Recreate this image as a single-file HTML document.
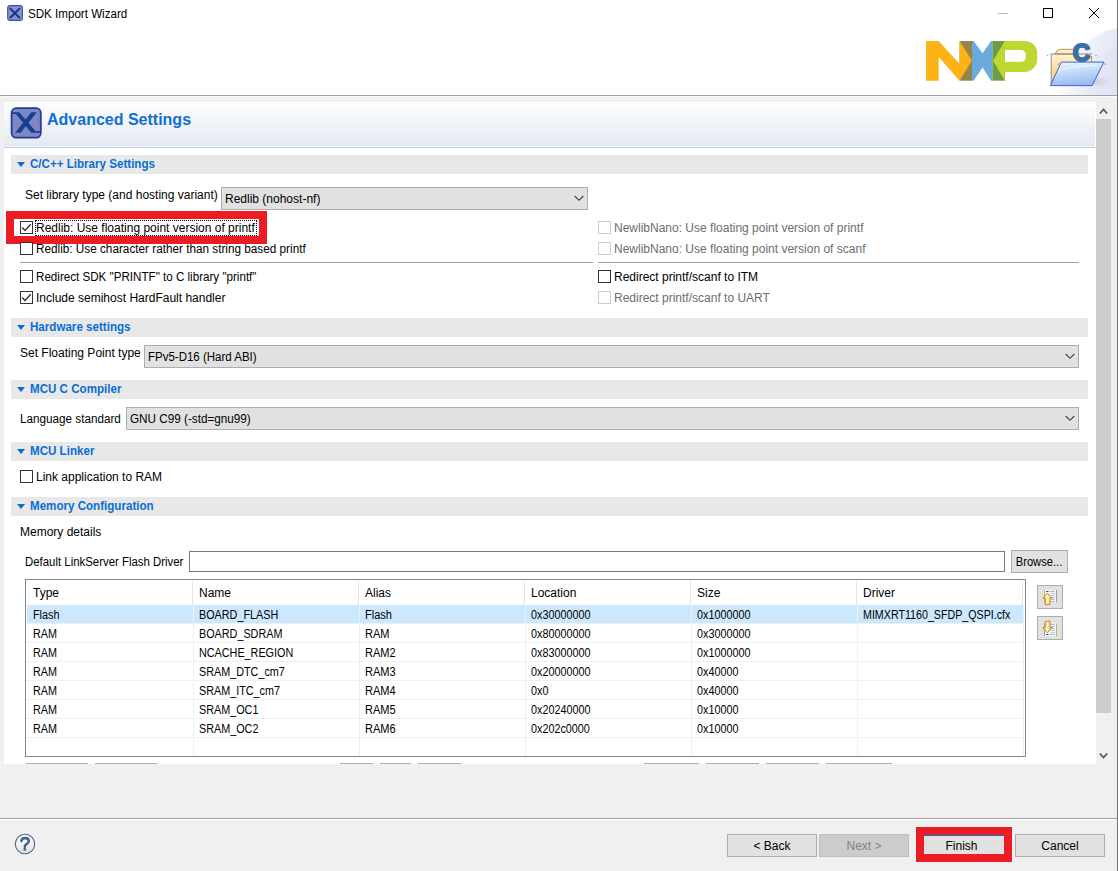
<!DOCTYPE html>
<html><head><meta charset="utf-8">
<style>
*{box-sizing:border-box}
html,body{margin:0;padding:0}
body{width:1118px;height:871px;overflow:hidden;position:relative;background:#f0f0f0;font-family:"Liberation Sans",sans-serif;font-size:12px;color:#000}
.a{position:absolute}
.t{position:absolute;white-space:nowrap;line-height:14px;font-size:12px}
.h{position:absolute;white-space:nowrap;line-height:14px;font-size:12px;font-weight:bold;color:#0a6ed6;transform:scaleX(0.966);transform-origin:0 0}
.bar{position:absolute;left:11px;width:1077px;height:19px;background:#e8e8e8}
.tri{position:absolute;left:17px;width:0;height:0;border-left:4.5px solid transparent;border-right:4.5px solid transparent;border-top:5px solid #0a6ed6}
.cb{position:absolute;width:13px;height:13px;border:1px solid #333;background:#fff}
.cbd{position:absolute;width:13px;height:13px;border:1px solid #cccccc;background:#fff}
.g{color:#6d6d6d}
.combo{position:absolute;height:23px;background:#e1e1e1;border:1px solid #adadad}
.btn{position:absolute;height:23px;background:#e1e1e1;border:1px solid #adadad;text-align:center;line-height:21px;padding-top:1px}
.hl{position:absolute;height:1px}
</style></head><body>

<!-- top white area -->
<div class="a" style="left:0;top:0;width:1117px;height:95px;background:#fff"></div>
<svg class="a" style="left:1030px;top:0" width="87" height="95" viewBox="0 0 87 95">
<defs><linearGradient id="sw1" x1="0" y1="0" x2="1" y2="0.3"><stop offset="0" stop-color="#ffffff" stop-opacity="0"/><stop offset="0.55" stop-color="#eef0fa"/><stop offset="1" stop-color="#e4e8f6"/></linearGradient>
<linearGradient id="sw2" x1="0" y1="0" x2="1" y2="0"><stop offset="0" stop-color="#e6e9f7" stop-opacity="0"/><stop offset="1" stop-color="#dde2f3"/></linearGradient></defs>
<path d="M87 28 C70 31 52 42 40 60 C32 72 28 85 27 95 L87 95 Z" fill="url(#sw1)"/>
<path d="M87 49 C76 50 66 54 58 62 C52 70 50 82 50 95 L87 95 Z" fill="url(#sw2)" opacity="0.8"/>
</svg>
<!-- title icon -->
<svg class="a" style="left:7px;top:5px" width="16" height="16" viewBox="0 0 32 32">
<rect x="1.4" y="1.2" width="29.4" height="29.6" rx="5" fill="#8a90c8" stroke="#3a4fa6" stroke-width="2.2"/>
<path d="M6.6 7.2 L24.6 25 M24.8 7.2 L7 25" stroke="#12348f" stroke-width="4" stroke-linecap="round"/>
</svg>
<div class="t" style="left:28px;top:7px;transform:scaleX(0.966);transform-origin:0 0">SDK Import Wizard</div>
<!-- window controls -->
<div class="a" style="left:998px;top:13px;width:10px;height:1px;background:#b8b8b8"></div>
<div class="a" style="left:1043px;top:8px;width:10px;height:10px;border:1px solid #000"></div>
<svg class="a" style="left:1088px;top:7px" width="12" height="12" viewBox="0 0 12 12"><path d="M1 1 L11 11 M11 1 L1 11" stroke="#000" stroke-width="1"/></svg>

<!-- NXP logo -->
<svg class="a" style="left:920px;top:36px" width="125" height="50" viewBox="920 36 125 50">
<rect x="959.6" y="41" width="12.4" height="39.7" fill="#958648"/>
<rect x="972" y="41" width="20.4" height="39.7" fill="#6caadd"/>
<rect x="992.4" y="41" width="12.4" height="39.7" fill="#6a9d45"/>
<polygon points="926,41 938.7,41 959.6,64.1 959.6,41 971.8,60.6 959.6,80.7 938.7,57 938.7,80.7 926,80.7" fill="#fdb316"/>
<polygon points="973.0,40.2 982.6,53.2 991.6,40.2" fill="#fff"/>
<polygon points="973.0,81.5 982.6,67.6 991.6,81.5" fill="#fff"/>
<path d="M1004.8,41 L1025,41 A12.2,12.2 0 0 1 1037.2,53.2 L1037.2,59.7 A12.2,12.2 0 0 1 1025,71.9 L1004.8,71.9 L1004.8,80.7 L993,60.7 Z M1004.8,50.1 L1004.8,61.8 L1021,61.8 A4.8,4.8 0 0 0 1025.8,57 L1025.8,54.9 A4.8,4.8 0 0 0 1021,50.1 Z" fill="#bfd730" fill-rule="evenodd"/>
</svg>

<!-- folder icon -->
<svg class="a" style="left:1040px;top:30px" width="78" height="65" viewBox="0 0 78 65">
<defs>
<linearGradient id="fb" x1="0" y1="0" x2="0" y2="1"><stop offset="0" stop-color="#fff4d2"/><stop offset="0.5" stop-color="#f8dd92"/><stop offset="1" stop-color="#efc65a"/></linearGradient>
<linearGradient id="ff" x1="0" y1="0" x2="0.25" y2="1"><stop offset="0" stop-color="#f2f9ff"/><stop offset="0.3" stop-color="#d2e7fc"/><stop offset="1" stop-color="#98bdec"/></linearGradient>
<radialGradient id="sh" cx="0.5" cy="0.5" r="0.5"><stop offset="0" stop-color="#b8b4cc" stop-opacity="0.55"/><stop offset="1" stop-color="#c8c8dc" stop-opacity="0"/></radialGradient>
</defs>
<ellipse cx="56" cy="52" rx="16" ry="7" fill="url(#sh)"/>
<path d="M10.8 56 L10.8 24 L52 24 L52 56 Z" fill="url(#fb)"/>
<path d="M15.2 24 Q16.5 19.6 19.5 19.3 L34 19.3 L34 24 Z" fill="#fbefc8" stroke="#b48c34" stroke-width="0.9"/>
<line x1="10.8" y1="24" x2="52" y2="24" stroke="#8c7c94" stroke-width="1"/>
<line x1="11.2" y1="24" x2="11.2" y2="56" stroke="#8f8fc0" stroke-width="1"/>
<line x1="51.5" y1="26" x2="51.5" y2="33" stroke="#c79a3a" stroke-width="1.2"/>
<path d="M6.5 26.2 Q7 25 8.5 25 M55 25 Q56.5 25 57 26.2" stroke="#9a9aa6" stroke-width="0.9" fill="none"/>
<text x="32.8" y="30.6" font-family="Liberation Sans" font-weight="bold" font-size="24" fill="#3a6fa8" stroke="#3a6fa8" stroke-width="2" stroke-linejoin="round">C</text>
<path d="M17.5 35 Q18 33.6 19.5 33.6 M64 33.6 Q65.5 33.6 66 35" stroke="#9a9aa6" stroke-width="0.9" fill="none"/>
<polygon points="21.3,32.1 63.8,32.1 52.2,55.6 10.4,55.6" fill="url(#ff)" stroke="#4562d6" stroke-width="1" stroke-linejoin="round"/>
<path d="M18 41 Q30 36 56 35.5" stroke="#ffffff" stroke-width="1.4" fill="none" opacity="0.45"/>
</svg>

<!-- separator under banner -->
<div class="a" style="left:0;top:95px;width:1117px;height:1px;background:#a0a0a0"></div>
<div class="a" style="left:0;top:96px;width:1117px;height:1px;background:#fafafa"></div>
<!-- right window border -->
<div class="a" style="left:1117px;top:0;width:1px;height:871px;background:#6f6f6f"></div>

<!-- content panel -->
<div class="a" style="left:4px;top:102px;width:1092px;height:662px;background:#fff"></div>
<div class="a" style="left:4px;top:102px;width:1091px;height:44px;background:linear-gradient(#fefefe,#e3e9f3)"></div>
<div class="a" style="left:4px;top:146px;width:1091px;height:1px;background:#f4f7fb"></div>
<div class="a" style="left:4px;top:147px;width:1091px;height:1px;background:#b9cde5"></div>
<svg class="a" style="left:10px;top:107px" width="32" height="32" viewBox="0 0 32 32">
<rect x="1.6" y="1.2" width="29.2" height="29.4" rx="4.5" fill="#7f86c0" stroke="#1f3f98" stroke-width="1.8"/>
<polygon points="2,5.2 9.3,5.2 25.4,24 29.75,24 29.75,25.85 21.26,25.85 5.87,7 2,7" fill="#163f96"/>
<polygon points="21.26,5.2 26.77,5.2 10.7,25.85 5.18,25.85" fill="#163f96"/>
</svg>
<div class="a" style="left:47px;top:111px;font-size:16px;line-height:18px;font-weight:bold;color:#0f6fd2;white-space:nowrap">Advanced Settings</div>

<!-- scrollbar -->
<div class="a" style="left:1096px;top:119px;width:15px;height:594px;background:#cdcdcd"></div>
<svg class="a" style="left:1099px;top:107px" width="9" height="8" viewBox="0 0 9 8"><path d="M0.8 6.5 L4.5 2.5 L8.2 6.5" fill="none" stroke="#505050" stroke-width="1.6"/></svg>
<svg class="a" style="left:1099px;top:752px" width="9" height="8" viewBox="0 0 9 8"><path d="M0.8 1.5 L4.5 5.5 L8.2 1.5" fill="none" stroke="#505050" stroke-width="1.6"/></svg>

<!-- Section 1 -->
<div class="bar" style="top:155px"></div>
<div class="tri" style="top:162px"></div>
<div class="h" style="left:30px;top:157px">C/C++ Library Settings</div>
<div class="t" style="left:25px;top:188px">Set library type (and hosting variant)</div>
<div class="combo" style="left:221px;top:187px;width:367px"></div>
<div class="t" style="left:225px;top:192px">Redlib (nohost-nf)</div>
<svg class="a" style="left:574px;top:195px" width="10" height="7" viewBox="0 0 10 7"><path d="M0.7 1 L5 5.3 L9.3 1" fill="none" stroke="#404040" stroke-width="1.1"/></svg>

<!-- red highlight box -->
<div class="a" style="left:6px;top:211px;width:261px;height:33px;border:8px solid #ec1c24"></div>
<div class="cb" style="left:20px;top:221px"></div>
<svg class="a" style="left:20px;top:221px" width="13" height="13" viewBox="0 0 13 13"><path d="M2.2 6.4 L5 9.4 L10.8 3.2" fill="none" stroke="#333" stroke-width="1.4"/></svg>
<div class="a" style="left:35px;top:220px;width:222px;height:16px;border:1px dotted #000"></div>
<div class="t" style="left:36px;top:221px">Redlib: Use floating point version of printf</div>
<div class="cb" style="left:20px;top:242px"></div>
<div class="t" style="left:36px;top:242px;transform:scaleX(0.979);transform-origin:0 0">Redlib: Use character rather than string based printf</div>
<div class="a" style="left:20px;top:262px;width:573px;height:1px;background:#a0a0a0"></div>
<div class="cb" style="left:20px;top:270px"></div>
<div class="t" style="left:36px;top:270px;transform:scaleX(0.968);transform-origin:0 0">Redirect SDK "PRINTF" to C library "printf"</div>
<div class="cb" style="left:20px;top:291px"></div>
<svg class="a" style="left:20px;top:291px" width="13" height="13" viewBox="0 0 13 13"><path d="M2.2 6.4 L5 9.4 L10.8 3.2" fill="none" stroke="#333" stroke-width="1.4"/></svg>
<div class="t" style="left:36px;top:291px">Include semihost HardFault handler</div>

<div class="cbd" style="left:598px;top:221px"></div>
<div class="t g" style="left:614px;top:221px">NewlibNano: Use floating point version of printf</div>
<div class="cbd" style="left:598px;top:242px"></div>
<div class="t g" style="left:614px;top:242px">NewlibNano: Use floating point version of scanf</div>
<div class="a" style="left:598px;top:262px;width:481px;height:1px;background:#a0a0a0"></div>
<div class="cb" style="left:598px;top:270px"></div>
<div class="t" style="left:614px;top:270px">Redirect printf/scanf to ITM</div>
<div class="cbd" style="left:598px;top:291px"></div>
<div class="t g" style="left:614px;top:291px">Redirect printf/scanf to UART</div>

<!-- Section 2 -->
<div class="bar" style="top:318px"></div>
<div class="tri" style="top:325px"></div>
<div class="h" style="left:30px;top:320px">Hardware settings</div>
<div class="t" style="left:20px;top:346px">Set Floating Point type</div>
<div class="combo" style="left:144px;top:345px;width:935px"></div>
<div class="t" style="left:148px;top:350px;transform:scaleX(0.958);transform-origin:0 0">FPv5-D16 (Hard ABI)</div>
<svg class="a" style="left:1065px;top:353px" width="10" height="7" viewBox="0 0 10 7"><path d="M0.7 1 L5 5.3 L9.3 1" fill="none" stroke="#404040" stroke-width="1.1"/></svg>

<!-- Section 3 -->
<div class="bar" style="top:380px"></div>
<div class="tri" style="top:387px"></div>
<div class="h" style="left:30px;top:382px">MCU C Compiler</div>
<div class="t" style="left:20px;top:412px;transform:scaleX(0.975);transform-origin:0 0">Language standard</div>
<div class="combo" style="left:126px;top:407px;width:953px"></div>
<div class="t" style="left:130px;top:412px;transform:scaleX(0.976);transform-origin:0 0">GNU C99 (-std=gnu99)</div>
<svg class="a" style="left:1065px;top:415px" width="10" height="7" viewBox="0 0 10 7"><path d="M0.7 1 L5 5.3 L9.3 1" fill="none" stroke="#404040" stroke-width="1.1"/></svg>

<!-- Section 4 -->
<div class="bar" style="top:442px"></div>
<div class="tri" style="top:449px"></div>
<div class="h" style="left:30px;top:444px">MCU Linker</div>
<div class="cb" style="left:20px;top:470px"></div>
<div class="t" style="left:36px;top:470px">Link application to RAM</div>

<!-- Section 5 -->
<div class="bar" style="top:497px"></div>
<div class="tri" style="top:504px"></div>
<div class="h" style="left:30px;top:499px">Memory Configuration</div>
<div class="t" style="left:20px;top:525px">Memory details</div>
<div class="t" style="left:25px;top:555px;transform:scaleX(0.95);transform-origin:0 0">Default LinkServer Flash Driver</div>
<div class="a" style="left:189px;top:551px;width:816px;height:21px;border:1px solid #7a7a7a;background:#fff"></div>
<div class="btn" style="left:1011px;top:550px;width:57px"><span style="display:inline-block;transform:scaleX(0.93)">Browse...</span></div>

<!-- table -->
<div class="a" style="left:25px;top:579px;width:1001px;height:178px;border:1px solid #828790;background:#fff"></div>
<div class="a" style="left:27px;top:605px;width:996px;height:18px;background:#cce8ff"></div>
<div class="a" style="left:192px;top:581px;width:1px;height:24px;background:#e5e5e5"></div>
<div class="a" style="left:193px;top:605px;width:1px;height:151px;background:#eaf0f8"></div>
<div class="a" style="left:358px;top:581px;width:1px;height:24px;background:#e5e5e5"></div>
<div class="a" style="left:359px;top:605px;width:1px;height:151px;background:#eaf0f8"></div>
<div class="a" style="left:524px;top:581px;width:1px;height:24px;background:#e5e5e5"></div>
<div class="a" style="left:525px;top:605px;width:1px;height:151px;background:#eaf0f8"></div>
<div class="a" style="left:690px;top:581px;width:1px;height:24px;background:#e5e5e5"></div>
<div class="a" style="left:691px;top:605px;width:1px;height:151px;background:#eaf0f8"></div>
<div class="a" style="left:856px;top:581px;width:1px;height:24px;background:#e5e5e5"></div>
<div class="a" style="left:857px;top:605px;width:1px;height:151px;background:#eaf0f8"></div>
<div class="a" style="left:1022px;top:581px;width:1px;height:24px;background:#e5e5e5"></div>
<div class="a" style="left:1023px;top:605px;width:1px;height:151px;background:#eaf0f8"></div>
<div class="a" style="left:26px;top:623px;width:997px;height:1px;background:#f0f0f0"></div>
<div class="a" style="left:26px;top:642px;width:997px;height:1px;background:#f0f0f0"></div>
<div class="a" style="left:26px;top:661px;width:997px;height:1px;background:#f0f0f0"></div>
<div class="a" style="left:26px;top:680px;width:997px;height:1px;background:#f0f0f0"></div>
<div class="a" style="left:26px;top:699px;width:997px;height:1px;background:#f0f0f0"></div>
<div class="a" style="left:26px;top:718px;width:997px;height:1px;background:#f0f0f0"></div>
<div class="a" style="left:26px;top:737px;width:997px;height:1px;background:#f0f0f0"></div>
<div class="t" style="left:33px;top:586px">Type</div>
<div class="t" style="left:199px;top:586px">Name</div>
<div class="t" style="left:365px;top:586px">Alias</div>
<div class="t" style="left:531px;top:586px">Location</div>
<div class="t" style="left:697px;top:586px">Size</div>
<div class="t" style="left:863px;top:586px">Driver</div>
<div class="t" style="left:33px;top:608px;transform:scaleX(0.9);transform-origin:0 0">Flash</div>
<div class="t" style="left:199px;top:608px;transform:scaleX(0.9);transform-origin:0 0">BOARD_FLASH</div>
<div class="t" style="left:365px;top:608px;transform:scaleX(0.92);transform-origin:0 0">Flash</div>
<div class="t" style="left:531px;top:608px;transform:scaleX(0.9);transform-origin:0 0">0x30000000</div>
<div class="t" style="left:697px;top:608px;transform:scaleX(0.9);transform-origin:0 0">0x1000000</div>
<div class="t" style="left:863px;top:608px;transform:scaleX(0.89);transform-origin:0 0">MIMXRT1160_SFDP_QSPI.cfx</div>
<div class="t" style="left:33px;top:627px;transform:scaleX(0.9);transform-origin:0 0">RAM</div>
<div class="t" style="left:199px;top:627px;transform:scaleX(0.9);transform-origin:0 0">BOARD_SDRAM</div>
<div class="t" style="left:365px;top:627px;transform:scaleX(0.92);transform-origin:0 0">RAM</div>
<div class="t" style="left:531px;top:627px;transform:scaleX(0.9);transform-origin:0 0">0x80000000</div>
<div class="t" style="left:697px;top:627px;transform:scaleX(0.9);transform-origin:0 0">0x3000000</div>
<div class="t" style="left:33px;top:646px;transform:scaleX(0.9);transform-origin:0 0">RAM</div>
<div class="t" style="left:199px;top:646px;transform:scaleX(0.9);transform-origin:0 0">NCACHE_REGION</div>
<div class="t" style="left:365px;top:646px;transform:scaleX(0.92);transform-origin:0 0">RAM2</div>
<div class="t" style="left:531px;top:646px;transform:scaleX(0.9);transform-origin:0 0">0x83000000</div>
<div class="t" style="left:697px;top:646px;transform:scaleX(0.9);transform-origin:0 0">0x1000000</div>
<div class="t" style="left:33px;top:665px;transform:scaleX(0.9);transform-origin:0 0">RAM</div>
<div class="t" style="left:199px;top:665px;transform:scaleX(0.9);transform-origin:0 0">SRAM_DTC_cm7</div>
<div class="t" style="left:365px;top:665px;transform:scaleX(0.92);transform-origin:0 0">RAM3</div>
<div class="t" style="left:531px;top:665px;transform:scaleX(0.9);transform-origin:0 0">0x20000000</div>
<div class="t" style="left:697px;top:665px;transform:scaleX(0.9);transform-origin:0 0">0x40000</div>
<div class="t" style="left:33px;top:684px;transform:scaleX(0.9);transform-origin:0 0">RAM</div>
<div class="t" style="left:199px;top:684px;transform:scaleX(0.9);transform-origin:0 0">SRAM_ITC_cm7</div>
<div class="t" style="left:365px;top:684px;transform:scaleX(0.92);transform-origin:0 0">RAM4</div>
<div class="t" style="left:531px;top:684px;transform:scaleX(0.9);transform-origin:0 0">0x0</div>
<div class="t" style="left:697px;top:684px;transform:scaleX(0.9);transform-origin:0 0">0x40000</div>
<div class="t" style="left:33px;top:703px;transform:scaleX(0.9);transform-origin:0 0">RAM</div>
<div class="t" style="left:199px;top:703px;transform:scaleX(0.9);transform-origin:0 0">SRAM_OC1</div>
<div class="t" style="left:365px;top:703px;transform:scaleX(0.92);transform-origin:0 0">RAM5</div>
<div class="t" style="left:531px;top:703px;transform:scaleX(0.9);transform-origin:0 0">0x20240000</div>
<div class="t" style="left:697px;top:703px;transform:scaleX(0.9);transform-origin:0 0">0x10000</div>
<div class="t" style="left:33px;top:722px;transform:scaleX(0.9);transform-origin:0 0">RAM</div>
<div class="t" style="left:199px;top:722px;transform:scaleX(0.9);transform-origin:0 0">SRAM_OC2</div>
<div class="t" style="left:365px;top:722px;transform:scaleX(0.92);transform-origin:0 0">RAM6</div>
<div class="t" style="left:531px;top:722px;transform:scaleX(0.9);transform-origin:0 0">0x202c0000</div>
<div class="t" style="left:697px;top:722px;transform:scaleX(0.9);transform-origin:0 0">0x10000</div>
<div class="btn" style="left:1037px;top:585px;width:26px;height:24px"></div>
<div class="btn" style="left:1037px;top:616px;width:26px;height:24px"></div>
<svg class="a" style="left:1042px;top:589px" width="17" height="17" viewBox="0 0 17 17">
<defs><linearGradient id="ar" x1="0" y1="0" x2="1" y2="0"><stop offset="0" stop-color="#f7d36a"/><stop offset="0.5" stop-color="#fff4c8"/><stop offset="1" stop-color="#e9b948"/></linearGradient></defs>
<rect x="2" y="1" width="13" height="12.5" fill="#f2f6fc"/>
<line x1="2.5" y1="1" x2="2.5" y2="13.5" stroke="#c8b46a" stroke-width="1"/>
<line x1="14.5" y1="1" x2="14.5" y2="13.5" stroke="#8ea0bc" stroke-width="1"/>
<line x1="4" y1="2.5" x2="6.5" y2="2.5" stroke="#2b5c9e" stroke-width="1"/>
<path d="M7.5 2.5H12.5M8.5 4.5H10M11 4.5H12.5M9.5 6.5H12.5M9.5 8.5H12.5M9.5 10.5H12.5M7.5 12.5H12.5" stroke="#9fb2cc" stroke-width="0.9"/>
<polygon points="5.4,4.2 10.2,9.2 8,9.2 8,15.4 3.2,15.4 3.2,9.2 0.8,9.2" fill="url(#ar)" stroke="#c58a1c" stroke-width="1" stroke-linejoin="round"/>
</svg>
<svg class="a" style="left:1042px;top:620px" width="17" height="17" viewBox="0 0 17 17">
<rect x="2" y="3.5" width="13" height="12.5" fill="#f2f6fc"/>
<line x1="2.5" y1="3.5" x2="2.5" y2="16" stroke="#8ea0bc" stroke-width="1"/>
<line x1="14.5" y1="3.5" x2="14.5" y2="16" stroke="#c8b46a" stroke-width="1"/>
<line x1="4" y1="14.5" x2="6.5" y2="14.5" stroke="#2b5c9e" stroke-width="1"/>
<path d="M7.5 14.5H12.5M8.5 12.5H10M11 12.5H12.5M9.5 10.5H12.5M9.5 8.5H12.5M9.5 6.5H12.5M7.5 4.5H12.5" stroke="#9fb2cc" stroke-width="0.9"/>
<polygon points="3.2,1.2 8,1.2 8,7.6 10.2,7.6 5.4,12.8 0.8,7.6 3.2,7.6" fill="url(#ar)" stroke="#c58a1c" stroke-width="1" stroke-linejoin="round"/>
</svg>

<!-- partial buttons -->
<div class="a" style="left:26px;top:763px;width:62px;height:1px;background:#adadad"></div>
<div class="a" style="left:95px;top:763px;width:62px;height:1px;background:#adadad"></div>
<div class="a" style="left:340px;top:763px;width:33px;height:1px;background:#adadad"></div>
<div class="a" style="left:380px;top:763px;width:31px;height:1px;background:#adadad"></div>
<div class="a" style="left:418px;top:763px;width:43px;height:1px;background:#adadad"></div>
<div class="a" style="left:644px;top:763px;width:55px;height:1px;background:#adadad"></div>
<div class="a" style="left:706px;top:763px;width:53px;height:1px;background:#adadad"></div>
<div class="a" style="left:766px;top:763px;width:53px;height:1px;background:#adadad"></div>
<div class="a" style="left:826px;top:763px;width:66px;height:1px;background:#adadad"></div>

<!-- bottom separator -->
<div class="a" style="left:0;top:818px;width:1117px;height:1px;background:#a0a0a0"></div>
<div class="a" style="left:0;top:819px;width:1117px;height:1px;background:#fff"></div>

<!-- help icon -->
<svg class="a" style="left:14px;top:833px" width="22" height="22" viewBox="0 0 22 22">
<defs><linearGradient id="hg" x1="0" y1="0" x2="0" y2="1"><stop offset="0" stop-color="#ffffff"/><stop offset="1" stop-color="#e2e2e2"/></linearGradient></defs>
<circle cx="11" cy="11" r="9.7" fill="url(#hg)" stroke="#4a6590" stroke-width="1.1"/>
<path d="M7.4 8.0 Q7.8 4.9 11.2 4.9 Q14.8 5.0 14.8 8.1 Q14.7 9.9 12.7 11.0 Q11.0 11.9 10.8 13.8" fill="none" stroke="#435e8c" stroke-width="2.5" stroke-linecap="round"/>
<circle cx="10.8" cy="16.4" r="1.4" fill="#435e8c"/>
</svg>

<!-- buttons -->
<div class="btn" style="left:727px;top:834px;width:90px">&lt; Back</div>
<div class="btn" style="left:819px;top:834px;width:90px;background:#cccccc;border-color:#bfbfbf;color:#838383">Next &gt;</div>
<div class="a" style="left:916px;top:827px;width:96px;height:35px;background:#ec1c24"></div>
<div class="btn" style="left:924px;top:835px;width:80px;height:19px;border:none;border-top:1px solid #0078d7;line-height:18px;padding:1px 5px 0 0">Finish</div>
<div class="btn" style="left:1015px;top:834px;width:90px">Cancel</div>

</body></html>
